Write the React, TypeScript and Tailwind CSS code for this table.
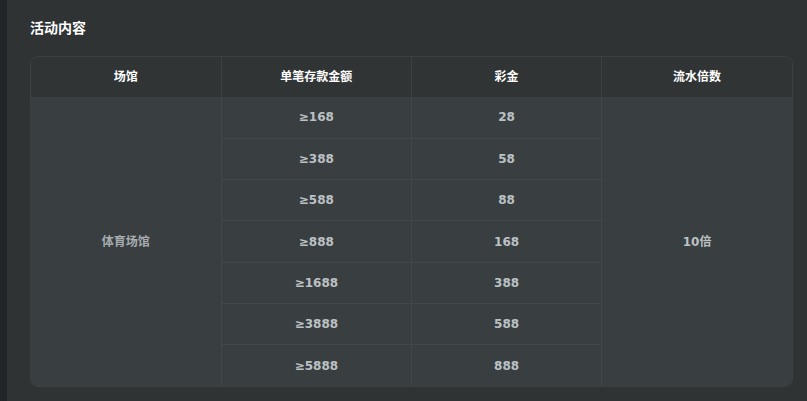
const rows = [
  { min: '≥168', bonus: '28' },
  { min: '≥388', bonus: '58' },
  { min: '≥588', bonus: '88' },
  { min: '≥888', bonus: '168' },
  { min: '≥1688', bonus: '388' },
  { min: '≥3888', bonus: '588' },
  { min: '≥5888', bonus: '888' },
];

const num = { fontFamily: '"DejaVu Sans", "Noto Sans CJK SC", sans-serif' };

export default function App() {
  return (
    <div
      className="flex h-[401px] w-[807px] bg-[#222527]"
      style={{ fontFamily: '"Liberation Sans", "Noto Sans CJK SC", sans-serif' }}
    >
      <div className="ml-[7px] flex-1 bg-[#2f3334] pl-[23px] pr-[14px] pt-[18px]">
        <h2 className="text-[14px] font-bold leading-[20px] text-white">活动内容</h2>

        <div className="mt-[18px] overflow-hidden rounded-[8px] border border-[#3b4042]">
          <table className="w-full table-fixed border-collapse text-center text-[12px] font-bold">
            <thead>
              <tr className="h-[40px] bg-[#303435] text-white">
                <th className="border-r border-[#3b4042] font-bold">场馆</th>
                <th className="border-r border-[#3b4042] font-bold">单笔存款金额</th>
                <th className="border-r border-[#3b4042] font-bold">彩金</th>
                <th className="font-bold">流水倍数</th>
              </tr>
            </thead>
            <tbody className="bg-[#393e41] text-[#bcc1c4]">
              {rows.map((r, i) => (
                <tr key={r.min} className="h-[41.3px]">
                  {i === 0 && (
                    <td rowSpan={7} className="border-r border-[#41474a] font-semibold text-[#a8adb0]">
                      体育场馆
                    </td>
                  )}
                  <td style={num} className={`border-r border-[#41474a] ${i > 0 ? 'border-t' : ''}`}>{r.min}</td>
                  <td style={num} className={`border-r border-[#41474a] ${i > 0 ? 'border-t' : ''}`}>{r.bonus}</td>
                  {i === 0 && (
                    <td rowSpan={7} style={num} className="text-[#bcc1c4]">
                      10倍
                    </td>
                  )}
                </tr>
              ))}
            </tbody>
          </table>
        </div>
      </div>
    </div>
  );
}
